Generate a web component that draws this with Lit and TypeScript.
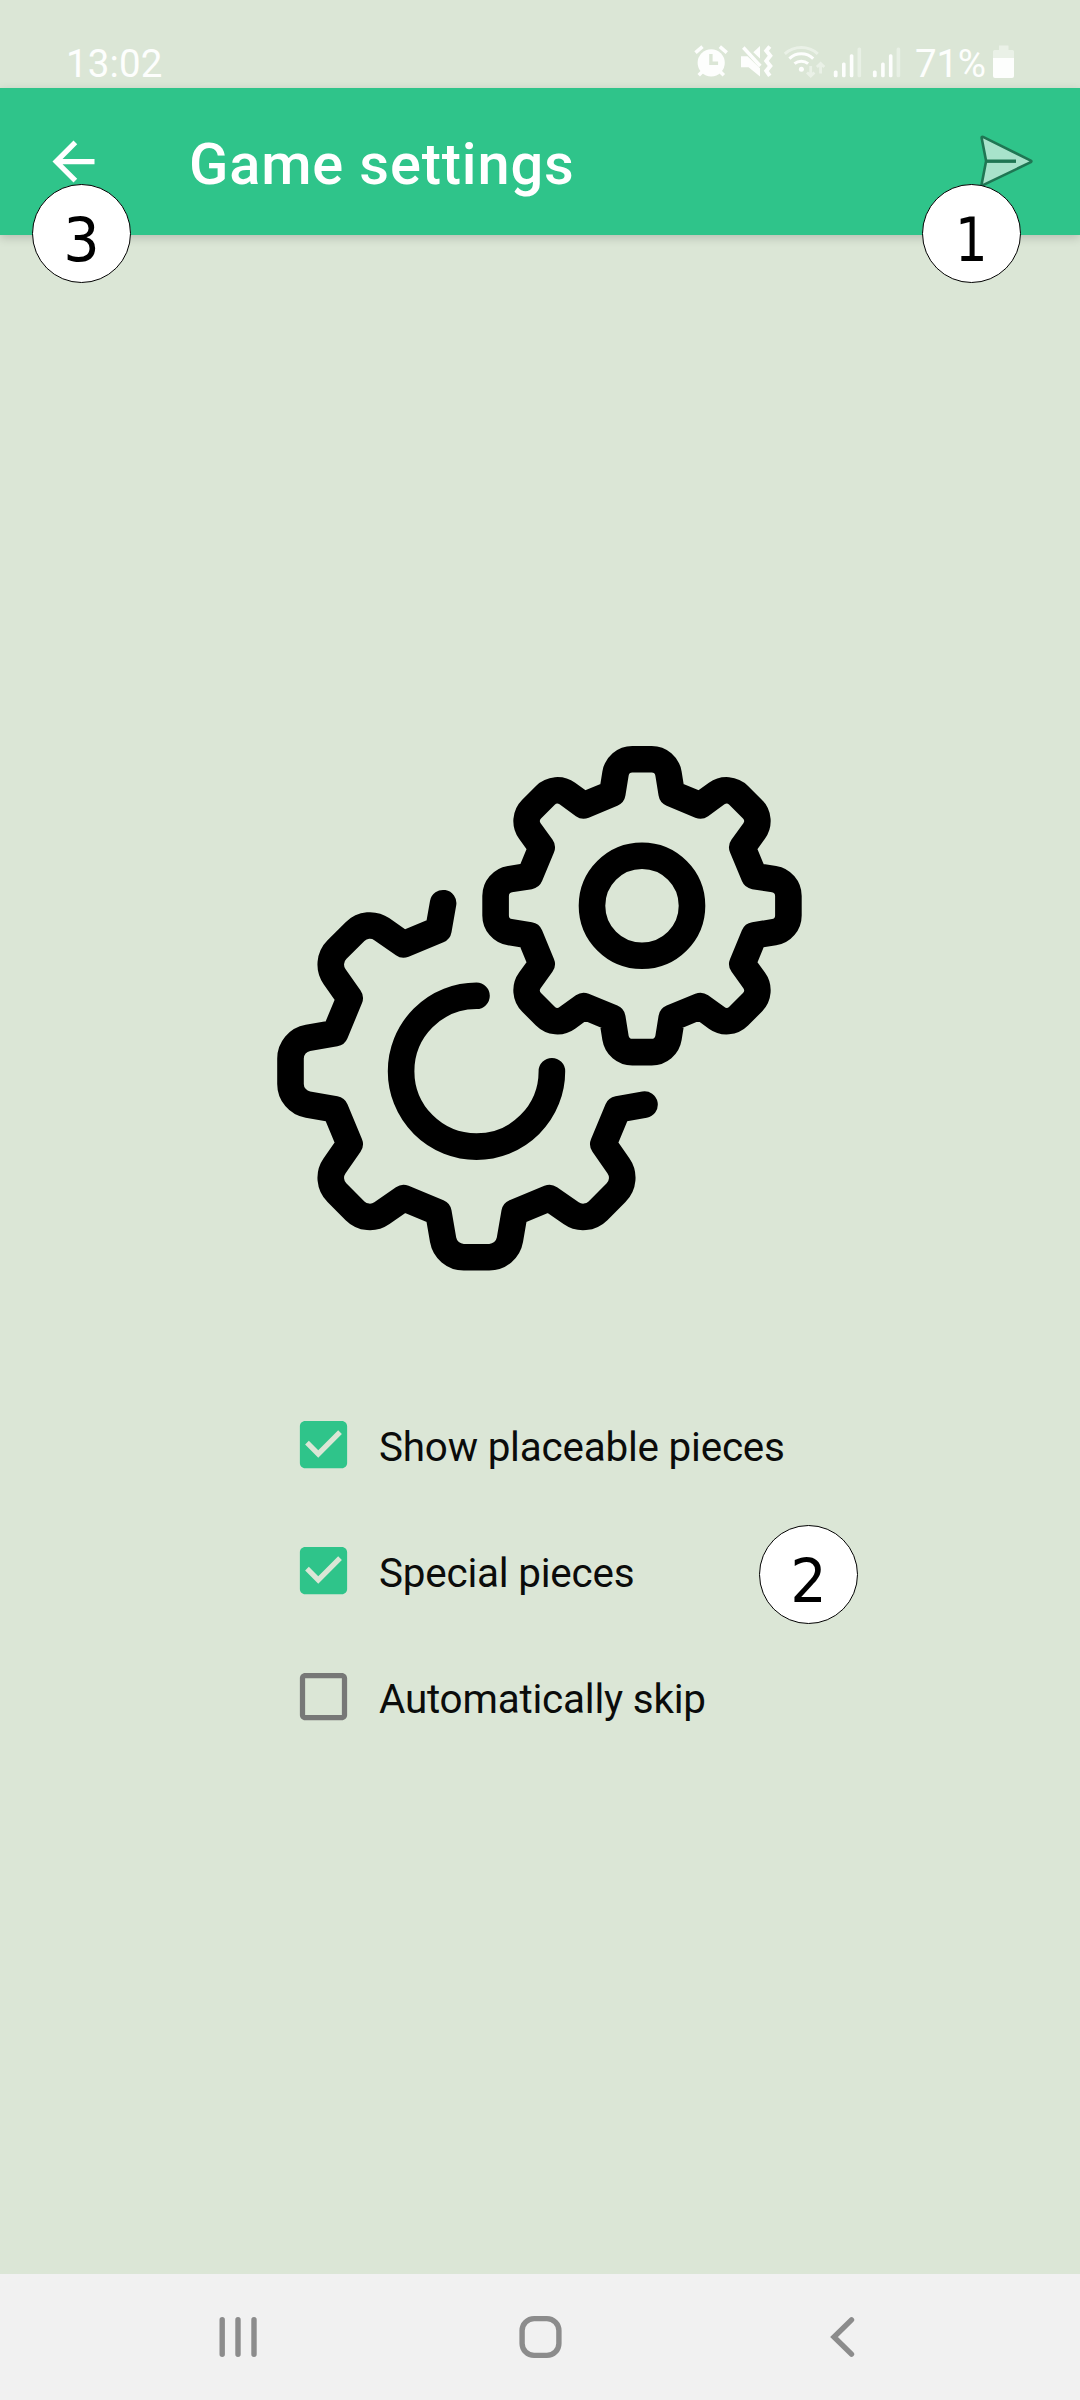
import { LitElement, html, svg, css } from "lit";
import { customElement, property, state } from "lit/decorators.js";

interface Option {
  label: string;
  checked: boolean;
}

type Point = [number, number];

/** Dimensions of a gear outline, measured along the stroke's centre line. */
interface Gear {
  cx: number;
  cy: number;
  rootX: number;
  rootY: number;
  tipX: number;
  tipY: number;
  corner: number;
}

const fmt = (p: Point) => `${p[0].toFixed(2)} ${p[1].toFixed(2)}`;

/** Places a point given in the frame of an upright tooth onto tooth number k (counter-clockwise). */
function place(g: Gear, k: number, x: number, y: number): Point {
  const a = (-k * Math.PI) / 4;
  return [g.cx + x * Math.cos(a) - y * Math.sin(a), g.cy + x * Math.sin(a) + y * Math.cos(a)];
}

/** One tooth, traced counter-clockwise from its right root to its left root. */
function tooth(g: Gear, k: number): string {
  const dx = g.rootX - g.tipX;
  const dy = g.tipY - g.rootY;
  const len = Math.hypot(dx, dy);
  const turn = Math.PI / 2 - Math.atan2(dx, dy);
  const t = g.corner * Math.tan(turn / 2);
  const sx = g.tipX + (dx / len) * t;
  const sy = -g.tipY + (dy / len) * t;
  const fx = g.tipX - t;
  return [
    `L${fmt(place(g, k, g.rootX, -g.rootY))}`,
    `L${fmt(place(g, k, sx, sy))}`,
    `A${g.corner} ${g.corner} 0 0 0 ${fmt(place(g, k, fx, -g.tipY))}`,
    `L${fmt(place(g, k, -fx, -g.tipY))}`,
    `A${g.corner} ${g.corner} 0 0 0 ${fmt(place(g, k, -sx, sy))}`,
    `L${fmt(place(g, k, -g.rootX, -g.rootY))}`,
  ].join("");
}

const SMALL: Gear = { cx: 365, cy: 159.7, rootX: 29.7, rootY: 112.2, tipX: 24.2, tipY: 146.4, corner: 17 };
const LARGE: Gear = { cx: 199.5, cy: 325.2, rootX: 38.1, rootY: 141.3, tipX: 30.4, tipY: 186, corner: 21 };

const smallPath =
  [0, 1, 2, 3, 4, 5, 6, 7].map((k) => tooth(SMALL, k)).join("").replace("L", "M") + "Z";

const largePath =
  `M${fmt(place(LARGE, 0, -33.4, -168))}L${fmt(place(LARGE, 0, -38.1, -141.3))}` +
  [1, 2, 3, 4, 5].map((k) => tooth({ ...LARGE, tipY: k % 2 ? 184.6 : 186 }, k)).join("") +
  `L${fmt(place(LARGE, 6, 38.1, -141.3))}L${fmt(place(LARGE, 6, 33.4, -168))}`;

@customElement("status-bar")
class StatusBar extends LitElement {
  static styles = css`
    :host {
      display: flex;
      align-items: flex-start;
      justify-content: space-between;
      height: 88px;
      box-sizing: border-box;
      padding: 40px 65px 0 66px;
      color: #fdfefd;
      font: 400 38.5px/46px Roboto, sans-serif;
    }
    .right {
      display: flex;
    }
    .icons {
      display: block;
      width: 220px;
      height: 46px;
      margin-right: 2px;
    }
    .battery {
      display: block;
      width: 22px;
      height: 46px;
      margin-left: 5px;
    }
    .clock {
      padding-top: 1px;
      letter-spacing: 0.1px;
    }
    .level {
      padding-top: 1px;
      letter-spacing: -0.2px;
      width: 73px;
      white-space: nowrap;
    }
  `;

  render() {
    return html`
      <span class="clock">13:02</span>
      <div class="right">
        <svg class="icons" viewBox="694 40 220 46" fill="#fdfefd" stroke="none">
          <circle cx="712.2" cy="62.8" r="13.6" />
          <path d="M696.5 52.6l7-6M727.8 52.6l-7-6M703.5 71.5l-3.8 3.8M721 71.5l3.8 3.8" stroke="#fdfefd" stroke-width="3.6" fill="none" />
          <path d="M711.9 54v9.3h7.2" stroke="#dbe6d6" stroke-width="3.4" fill="none" />
          <path d="M742 56.3h6.5l12.5 12V76.5L749.6 67.2H742z" />
          <path d="M754.3 52.2l6.7-6.2v12.6z" />
          <path d="M744.3 47.5l17 18.5" stroke="#fdfefd" stroke-width="3.4" fill="none" />
          <path d="M770.8 46.5l-3.5 4.2 4 5-4 5.2 4 5-4 5 3.5 5" stroke="#fdfefd" stroke-width="4" fill="none" />
          <g fill="none" stroke="#fdfefd" stroke-width="3">
            <path d="M785.8 53.8a24.5 24.5 0 0 1 33 0" opacity=".45" />
            <path d="M790.4 58.6a17 17 0 0 1 23.8 0" />
            <path d="M795.5 63.7a10.5 10.5 0 0 1 13.6 0" />
          </g>
          <circle cx="802.4" cy="69.2" r="2.5" />
          <path d="M811.7 66v9.5M808 72.5l3.7 3.5 3.7-3.5M821.6 73.5v-9M817.9 67l3.7-3.5 3.7 3.5" fill="none" stroke="#fdfefd" stroke-width="2.8" opacity=".45" />
          ${[0, 39.1].map(
            (x) => svg`
              <g transform="translate(${x} 0)">
                <rect x="834.8" y="70.5" width="3.8" height="6.7" rx="1.5" />
                <rect x="843" y="62.5" width="3.6" height="14.7" rx="1.5" />
                <rect x="850.8" y="54.3" width="3.6" height="22.9" rx="1.5" />
                <rect x="858.5" y="47.5" width="3.6" height="29.7" rx="1.5" opacity=".4" />
              </g>`
          )}
        </svg>
        <span class="level">71%</span>
        <svg class="battery" viewBox="993 40 22 46" fill="#fdfefd">
          <path d="M999 45.6h9.5v4.4h4a1.5 1.5 0 0 1 1.5 1.5V58h-21v-6.5a1.5 1.5 0 0 1 1.5-1.5h4.5z" opacity=".45" />
          <path d="M993 58h21v17.9a2 2 0 0 1-2 2h-17a2 2 0 0 1-2-2z" />
        </svg>
      </div>
    `;
  }
}

@customElement("app-bar")
class AppBar extends LitElement {
  static styles = css`
    :host {
      display: flex;
      align-items: center;
      height: 147px;
      box-sizing: border-box;
      padding: 0 42px;
      background: #2fc48a;
      box-shadow: 0 3px 9px rgba(0, 0, 0, 0.17);
      color: #fff;
    }
    .back {
      display: block;
      width: 63px;
      height: 63px;
    }
    .title {
      flex: 1;
      margin: 4px 0 0 84px;
      font: 500 57.75px/70px Roboto, sans-serif;
      letter-spacing: 0.85px;
      white-space: nowrap;
    }
    .send {
      display: block;
      width: 63px;
      height: 63px;
    }
  `;

  render() {
    return html`
      <svg class="back" viewBox="0 0 24 24" fill="#fff">
        <path d="M20 11H7.83l5.59-5.59L12 4l-8 8 8 8 1.41-1.41L7.83 13H20v-2z" />
      </svg>
      <div class="title">Game settings</div>
      <svg class="send" viewBox="975.5 130 63 63" stroke="#1f7653" stroke-width="2.6" stroke-linejoin="round">
        <path d="M983.5 136.9q-1.6-.4-1.3 1.3L986.6 161l-4.4 23q-.3 1.7 1.3 1.1L1031.3 162.2q1.3-.9 0-1.6z" fill="#a8e3cb" />
        <path d="M986.5 161.2h30" stroke-width="3.4" />
      </svg>
    `;
  }
}

@customElement("option-row")
class OptionRow extends LitElement {
  @property() label = "";
  @property({ type: Boolean }) checked = false;

  static styles = css`
    :host {
      display: flex;
      align-items: center;
      height: 126px;
      color: #0b0c0b;
      font: 400 40.4px/48px Roboto, sans-serif;
      letter-spacing: -0.2px;
      white-space: nowrap;
      cursor: pointer;
    }
    .box {
      display: block;
      width: 63px;
      height: 63px;
      margin-right: 24px;
    }
    .label {
      margin-top: 7px;
    }
  `;

  render() {
    return html`
      <svg class="box" viewBox="0 0 24 24">
        ${this.checked
          ? svg`<path fill="#2fc48a" d="M19 3H5c-1.11 0-2 .9-2 2v14c0 1.1.89 2 2 2h14c1.11 0 2-.9 2-2V5c0-1.1-.89-2-2-2zm-9 14l-5-5 1.41-1.41L10 14.17l7.59-7.59L19 8l-9 9z" />`
          : svg`<path fill="#777877" d="M19 5v14H5V5h14m0-2H5c-1.1 0-2 .9-2 2v14c0 1.1.9 2 2 2h14c1.1 0 2-.9 2-2V5c0-1.1-.9-2-2-2z" />`}
      </svg>
      <span class="label">${this.label}</span>
    `;
  }
}

@customElement("nav-bar")
class NavBar extends LitElement {
  static styles = css`
    :host {
      display: flex;
      align-items: center;
      justify-content: space-between;
      height: 126px;
      box-sizing: border-box;
      padding: 0 206px 0 207px;
      background: #f1f1f1;
    }
    .key {
      display: block;
      width: 62px;
      height: 62px;
      fill: none;
      stroke: #8c8c8c;
      stroke-width: 5.4;
      stroke-linecap: round;
    }
  `;

  render() {
    return html`
      <svg class="key" viewBox="0 0 62 62"><path d="M15.2 13.7v34.6M31 13.7v34.6M47 13.7v34.6" /></svg>
      <svg class="key" viewBox="0 0 62 62"><rect x="12.1" y="12.6" width="36.8" height="36.8" rx="12" /></svg>
      <svg class="key" viewBox="0 0 62 62"><path d="M39.5 13.9L22 31l17.5 17.1" /></svg>
    `;
  }
}

@customElement("app-root")
class AppRoot extends LitElement {
  @state() private options: Option[] = [
    { label: "Show placeable pieces", checked: true },
    { label: "Special pieces", checked: true },
    { label: "Automatically skip", checked: false },
  ];

  static styles = css`
    :host {
      display: flex;
      flex-direction: column;
      position: relative;
      width: 1080px;
      height: 2400px;
      overflow: hidden;
      background: #dbe6d6;
    }
    .content {
      flex: 1;
      display: flex;
      flex-direction: column;
      padding-top: 511px;
    }
    .gears {
      display: block;
      align-self: center;
      width: 526px;
      height: 525px;
      fill: none;
      stroke: #000;
      stroke-width: 26.6;
      stroke-linecap: round;
      stroke-linejoin: round;
    }
    .options {
      display: flex;
      flex-direction: column;
      align-items: flex-start;
      padding: 110px 0 0 292px;
    }
    .marker {
      position: absolute;
      display: flex;
      align-items: center;
      justify-content: center;
      width: 99px;
      height: 99px;
      box-sizing: border-box;
      padding-top: 12px;
      border: 1px solid #000;
      border-radius: 50%;
      background: #fff;
      color: #000;
      font: 400 61px/70px "DejaVu Sans", sans-serif;
    }
    .digit {
      transform: scaleX(0.94);
    }
    .narrow {
      transform: scaleX(0.84);
    }
    .marker-send {
      left: 922px;
      top: 184px;
    }
    .marker-options {
      left: 759px;
      top: 1525px;
    }
    .marker-back {
      left: 32px;
      top: 184px;
    }
  `;

  private toggle(index: number) {
    this.options = this.options.map((o, i) => (i === index ? { ...o, checked: !o.checked } : o));
  }

  render() {
    return html`
      <status-bar></status-bar>
      <app-bar></app-bar>
      <main class="content">
        <svg class="gears" viewBox="0 0 526 525">
          <path d=${smallPath} />
          <circle cx="365" cy="159.7" r="50" />
          <path d=${largePath} />
          <path d="M199.5 249.8A75.4 75.4 0 1 0 274.9 325.2" />
        </svg>
        <div class="options">
          ${this.options.map(
            (o, i) => html`<option-row
              .label=${o.label}
              ?checked=${o.checked}
              @click=${() => this.toggle(i)}
            ></option-row>`
          )}
        </div>
      </main>
      <nav-bar></nav-bar>
      <div class="marker marker-send"><span class="narrow">1</span></div>
      <div class="marker marker-options"><span class="digit">2</span></div>
      <div class="marker marker-back"><span class="digit">3</span></div>
    `;
  }
}
